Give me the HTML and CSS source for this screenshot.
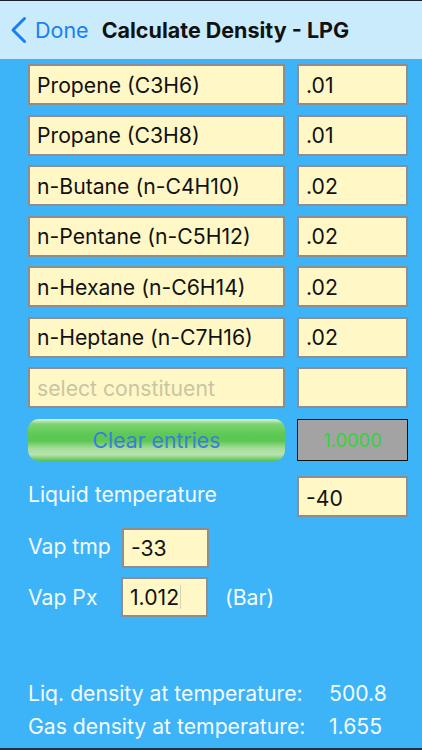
FILE: index.html
```html
<!DOCTYPE html>
<html lang="en">
<head>
    <meta charset="UTF-8">
    <title>Calculate Density - LPG</title>
    <link rel="stylesheet" href="styles.css">
</head>
<body>
<div id="screen">
    <div id="nav">
        <div class="back">
            <svg width="17" height="28" viewBox="0 0 17 28">
                <path d="M14.5 2.5 L3 14 L14.5 25.5" fill="none" stroke="#1a7ff0" stroke-width="3" stroke-linecap="round" stroke-linejoin="round"/>
            </svg>
            <span>Done</span>
        </div>
        <div class="title">Calculate Density - LPG</div>
    </div>
    <div id="main">
        <div class="grid">
            <div class="field">Propene (C3H6)</div>
            <div class="field">.01</div>
            <div class="field">Propane (C3H8)</div>
            <div class="field">.01</div>
            <div class="field">n-Butane (n-C4H10)</div>
            <div class="field">.02</div>
            <div class="field">n-Pentane (n-C5H12)</div>
            <div class="field">.02</div>
            <div class="field">n-Hexane (n-C6H14)</div>
            <div class="field">.02</div>
            <div class="field">n-Heptane (n-C7H16)</div>
            <div class="field">.02</div>
            <div class="field placeholder">select constituent</div>
            <div class="field"></div>
        </div>
        <div class="actions">
            <div class="clear">Clear entries</div>
            <div class="total">1.0000</div>
        </div>
        <div class="liquid">
            <div class="label">Liquid temperature</div>
            <div class="field">-40</div>
        </div>
        <div class="vap">
            <div class="label">Vap tmp</div>
            <div class="field small">-33</div>
        </div>
        <div class="vap px">
            <div class="label">Vap Px</div>
            <div class="field small">1.012<i class="caret"></i></div>
            <div class="unit">(Bar)</div>
        </div>
        <div class="results">
            <div class="result"><span>Liq. density at temperature:</span><span class="val">500.8</span></div>
            <div class="result"><span>Gas density at temperature:</span><span class="val">1.655</span></div>
        </div>
    </div>
</div>
</body>
</html>
```
FILE: styles.css
```css
body {
    margin: 0;
    font-family: Inter, "Liberation Sans", sans-serif;
}

#screen {
    width: 422px;
    height: 750px;
    display: flex;
    flex-direction: column;
    overflow: hidden;
    background: #3db4f8;
    border-bottom: 2px solid #1c3346;
    box-sizing: border-box;
}

#nav {
    height: 59px;
    flex: none;
    box-sizing: border-box;
    border-top: 1px solid #16222c;
    background: #c9ebfb;
    display: flex;
    align-items: center;
    padding-left: 10px;
}

.back {
    display: flex;
    align-items: center;
    gap: 8px;
    color: #1a7ff0;
    font-size: 21.5px;
}

.title {
    margin-left: 13px;
    font-size: 21.5px;
    font-weight: 700;
    color: #111;
}

#main {
    padding: 5px 14px 0 28px;
    flex: 1;
    display: flex;
    flex-direction: column;
}

.grid {
    display: grid;
    grid-template-columns: 257px 111px;
    column-gap: 12px;
    row-gap: 9.5px;
    grid-auto-rows: 41px;
}

.field {
    box-sizing: border-box;
    height: 41px;
    background: #fff8c6;
    border: 2px solid #8e8e8e;
    display: flex;
    align-items: center;
    padding-left: 7px;
    font-size: 21.2px;
    color: #111;
    white-space: nowrap;
}

.placeholder {
    color: #c9c5a4;
}

.actions {
    display: flex;
    gap: 12px;
    margin-top: 11px;
    height: 42px;
}

.clear {
    width: 257px;
    border-radius: 11px;
    display: flex;
    align-items: center;
    justify-content: center;
    font-size: 21.2px;
    color: #3a7ed8;
    background: linear-gradient(#dff4da 0%, #7ed474 12%, #5ec955 35%, #5cc652 52%, #a6dd9d 70%, #b7e3ae 85%, #55c14d 100%);
}

.total {
    width: 111px;
    box-sizing: border-box;
    background: #a3a3a3;
    border: 1.5px solid #111;
    display: flex;
    align-items: center;
    justify-content: center;
    color: #33d43a;
    font-size: 18.3px;
}

.liquid {
    display: flex;
    justify-content: space-between;
    margin-top: 15px;
}

.liquid .label {
    margin-top: 5px;
}

.liquid .field {
    width: 111px;
    padding-top: 2px;
}

.label {
    color: #f4fbff;
    font-size: 21.2px;
}

.vap {
    display: flex;
    align-items: center;
    margin-top: 11px;
    height: 40px;
}

.vap .label {
    width: 94px;
    margin-top: -4px;
}

.vap .field.small {
    width: 87px;
    height: 40px;
}

.vap.px {
    margin-top: 9px;
}

.vap.px .label {
    width: 93px;
    margin-top: 0;
}

.caret {
    display: inline-block;
    width: 1px;
    height: 24px;
    margin-left: 1px;
    background: #d8d2b0;
}

.unit {
    margin-left: 17px;
    color: #f4fbff;
    font-size: 21.2px;
}

.results {
    margin-top: auto;
    margin-bottom: 9px;
    display: flex;
    flex-direction: column;
    gap: 7px;
}

.result {
    display: flex;
    color: #f4fbff;
    font-size: 21.2px;
}

.result span:first-child {
    width: 301px;
}
```
